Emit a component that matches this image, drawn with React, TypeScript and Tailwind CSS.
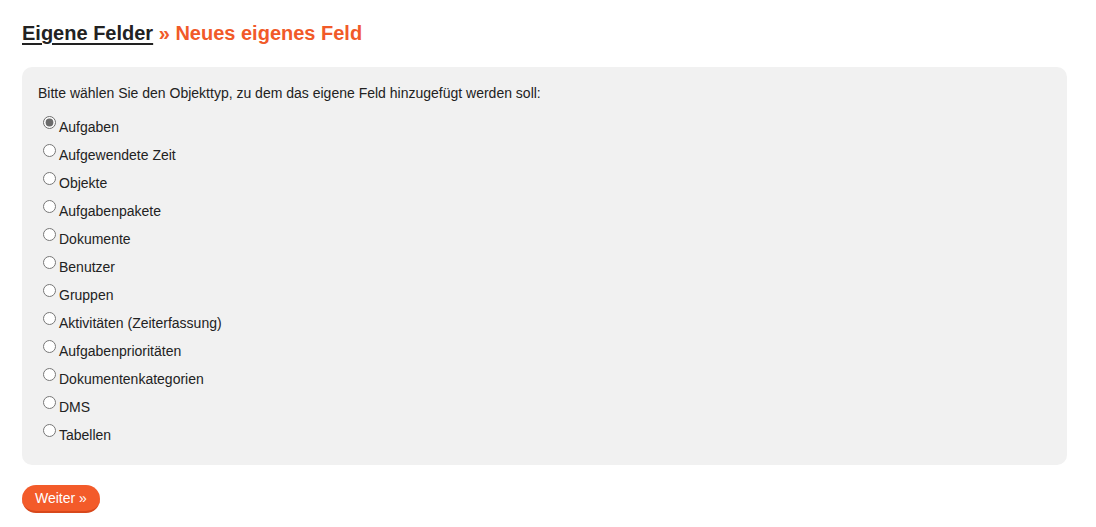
import { useState } from 'react'

const TYPES = [
  'Aufgaben',
  'Aufgewendete Zeit',
  'Objekte',
  'Aufgabenpakete',
  'Dokumente',
  'Benutzer',
  'Gruppen',
  'Aktivitäten (Zeiterfassung)',
  'Aufgabenprioritäten',
  'Dokumentenkategorien',
  'DMS',
  'Tabellen',
]

export default function App() {
  const [selected, setSelected] = useState('Aufgaben')

  return (
    <div
      className="min-h-[527px] bg-white px-[22px] pt-[21px] text-[#222]"
      style={{ fontFamily: '"Liberation Sans", Arial, sans-serif' }}
    >
      <h1 className="text-[20px] font-bold leading-[24px]">
        <a href="#" className="text-[#222] underline underline-offset-[3px]">
          Eigene Felder
        </a>
        <span className="text-[#f15a29]"> » Neues eigenes Feld</span>
      </h1>

      <div className="mt-[22px] w-[1045px] rounded-[10px] bg-[#f1f1f1] px-4 py-4 text-[14px]">
        <p className="leading-5">
          Bitte wählen Sie den Objekttyp, zu dem das eigene Feld hinzugefügt werden soll:
        </p>
        <div className="mt-[10px] flex flex-col">
          {TYPES.map((type) => (
            <label key={type} className="flex h-7 items-start">
              <input
                type="radio"
                name="objecttype"
                checked={selected === type}
                onChange={() => setSelected(type)}
                className="ml-[5px] mr-[3px] mt-[3px] h-[13px] w-[13px] accent-[#6b6b6b]"
              />
              <span className="leading-[28px]">{type}</span>
            </label>
          ))}
        </div>
      </div>

      <button className="mt-5 h-7 rounded-full border-b-2 border-[#d8481c] bg-[#f35b2a] px-[13px] pt-px text-[14px] leading-[25px] text-white">
        Weiter »
      </button>
    </div>
  )
}
